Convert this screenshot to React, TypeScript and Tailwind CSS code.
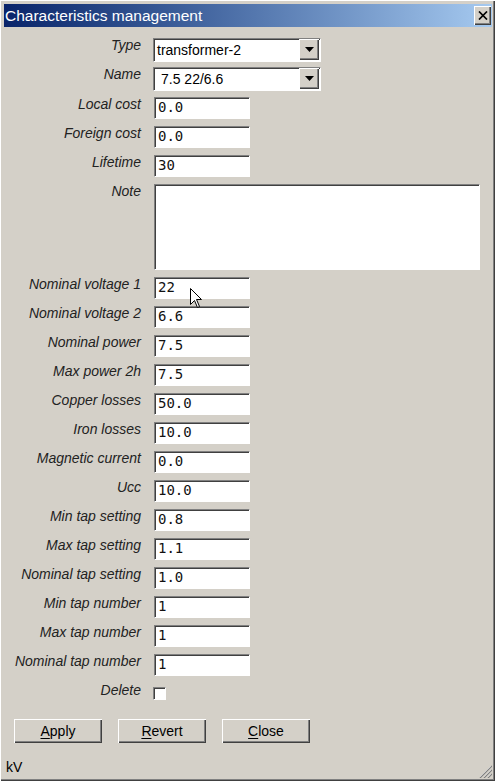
import React from 'react';

const sunken =
  'bg-white border border-t-[#808080] border-l-[#808080] border-b-white border-r-white shadow-[inset_1px_1px_0_#404040]';
const raised =
  'bg-[#d4d0c8] shadow-[inset_1px_1px_0_#ffffff,inset_-1px_-1px_0_#404040,inset_-2px_-2px_0_#808080]';

const fields: { label: string; value: string }[] = [
  { label: 'Nominal voltage 1', value: '22' },
  { label: 'Nominal voltage 2', value: '6.6' },
  { label: 'Nominal power', value: '7.5' },
  { label: 'Max power 2h', value: '7.5' },
  { label: 'Copper losses', value: '50.0' },
  { label: 'Iron losses', value: '10.0' },
  { label: 'Magnetic current', value: '0.0' },
  { label: 'Ucc', value: '10.0' },
  { label: 'Min tap setting', value: '0.8' },
  { label: 'Max tap setting', value: '1.1' },
  { label: 'Nominal tap setting', value: '1.0' },
  { label: 'Min tap number', value: '1' },
  { label: 'Max tap number', value: '1' },
  { label: 'Nominal tap number', value: '1' },
];

const Label = ({ text }: { text: string }) => (
  <div className="w-[142px] pr-[1px] text-right italic text-[14px] leading-[16px] text-[#222] -mt-[1px]">
    {text}
  </div>
);

const TextField = ({ value }: { value: string }) => (
  <div
    className={`${sunken} w-[96px] h-[22px] pl-[3px] font-['DejaVu_Sans_Mono',monospace] text-[14px] leading-[19px] text-[#111]`}
  >
    {value}
  </div>
);

const Combo = ({ value, pad }: { value: string; pad: string }) => (
  <div className={`${sunken} ml-[-1px] w-[168px] h-[24px] flex items-stretch p-[1px] pl-0 pt-0`}>
    <div className={`flex-1 ${pad} text-[14px] leading-[21px] text-black pt-[1px]`}>{value}</div>
    <div className={`${raised} w-[20px] flex items-center justify-center`}>
      <svg width="9" height="5" viewBox="0 0 9 5">
        <path d="M0 0 H9 L4.5 5 Z" fill="#000" />
      </svg>
    </div>
  </div>
);

const Row = ({ label, mt, children }: { label: string; mt: string; children: React.ReactNode }) => (
  <div className={`flex items-start gap-[12px] ${mt}`}>
    <Label text={label} />
    {children}
  </div>
);

const Button = ({ first, rest }: { first: string; rest: string }) => (
  <div className={`${raised} w-[88px] h-[24px] flex items-center justify-center text-[14px] text-black`}>
    <span>
      <span className="underline underline-offset-2">{first}</span>
      {rest}
    </span>
  </div>
);

export default function App() {
  return (
    <div className="relative w-[495px] h-[781px] bg-[#d4d0c8] font-['Liberation_Sans',Arial,sans-serif] shadow-[inset_1px_1px_0_#ffffff,inset_-1px_-1px_0_#404040,inset_-2px_-2px_0_#808080] overflow-hidden select-none">
      <div className="pt-[4px] pl-[4px] pr-[3px]">
        <div className="h-[23px] bg-gradient-to-r from-[#0a246a] to-[#a6caf0] flex items-center justify-between pr-[1px]">
          <span className="text-white text-[15.5px] leading-[18px] pl-[1px]">Characteristics management</span>
          <div className={`${raised} w-[17px] h-[19px] flex items-center justify-center`}>
            <svg width="10" height="9" viewBox="0 0 10 9">
              <path d="M1 0.5 L9 8.5 M9 0.5 L1 8.5" stroke="#000" strokeWidth="1.7" />
            </svg>
          </div>
        </div>
      </div>

      <div className="flex flex-col">
        <Row label="Type" mt="mt-[11px]">
          <Combo value="transformer-2" pad="pl-[3px]" />
        </Row>
        <Row label="Name" mt="mt-[5px]">
          <Combo value="7.5 22/6.6" pad="pl-[7px]" />
        </Row>
        <Row label="Local cost" mt="mt-[6px]">
          <TextField value="0.0" />
        </Row>
        <Row label="Foreign cost" mt="mt-[7px]">
          <TextField value="0.0" />
        </Row>
        <Row label="Lifetime" mt="mt-[7px]">
          <TextField value="30" />
        </Row>
        <Row label="Note" mt="mt-[7px]">
          <div className={`${sunken} w-[326px] h-[86px]`} />
        </Row>
        {fields.map((f) => (
          <Row key={f.label} label={f.label} mt="mt-[7px]">
            <TextField value={f.value} />
          </Row>
        ))}
        <Row label="Delete" mt="mt-[7px]">
          <div className={`${sunken} ml-[-1px] mt-[4px] w-[13px] h-[13px]`} />
        </Row>

        <div className="flex gap-[16px] pl-[14px] mt-[19px]">
          <Button first="A" rest="pply" />
          <Button first="R" rest="evert" />
          <Button first="C" rest="lose" />
        </div>

        <div className="pl-[6px] mt-[16px] text-[14px] leading-[16px] text-black">kV</div>
      </div>

      {/* mouse pointer over the first voltage field */}
      <svg className="absolute left-[190px] top-[288px]" width="13" height="21" viewBox="0 0 13 21">
        <path d="M0.5 0.5 V16.5 L4.5 12.5 L7.5 19.5 L9.5 18.5 L6.5 11.5 H11.5 Z" fill="#fff" stroke="#000" strokeWidth="1" />
      </svg>

      {/* resize grip */}
      <svg className="absolute right-[3px] bottom-[3px]" width="13" height="13" viewBox="0 0 13 13">
        <path d="M12 1 L1 12 M12 5 L5 12 M12 9 L9 12" stroke="#ffffff" strokeWidth="1" />
        <path d="M13 1 L1 13 M13 5 L5 13 M13 9 L9 13" stroke="#808080" strokeWidth="1.2" />
      </svg>
    </div>
  );
}
